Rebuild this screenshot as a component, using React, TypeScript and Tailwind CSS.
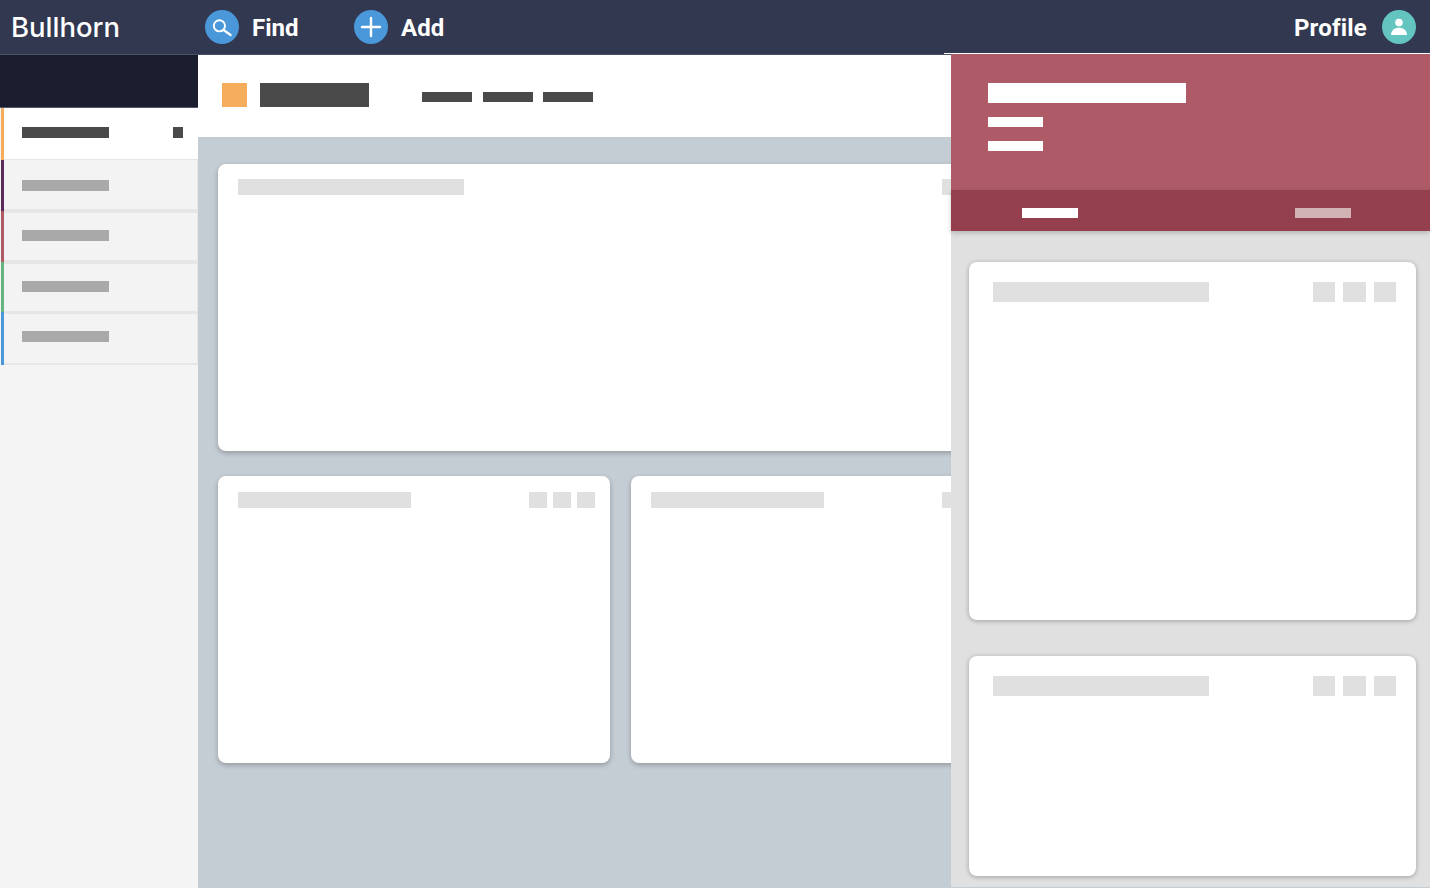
import React from 'react';

const sideRows = [
  { accent: 'bg-[#f5ad5b]', h: 'h-[52px]', cell: 'border-b pt-[19px] bg-white', bar: 'bg-[#4a4a4a]', active: true },
  { accent: 'bg-[#5a2a5c]', h: 'h-[51px]', cell: 'border-b-2 border-r pt-[20px]', bar: 'bg-[#a9a9a9]', active: false },
  { accent: 'bg-[#ae5b67]', h: 'h-[51px]', cell: 'border-t-2 border-b-2 border-r pt-[17px]', bar: 'bg-[#a9a9a9]', active: false },
  { accent: 'bg-[#66b57f]', h: 'h-[50px]', cell: 'border-t-2 border-b border-r pt-[17px]', bar: 'bg-[#a9a9a9]', active: false },
  { accent: 'bg-[#4a98d9]', h: 'h-[53px]', cell: 'border-t-2 border-b-2 border-r pt-[17px]', bar: 'bg-[#a9a9a9]', active: false },
];

const MainCard = ({ titleWidth, className }: { titleWidth: string; className: string }) => (
  <div className={`bg-white rounded-lg shadow-[0_2px_5px_rgba(0,0,0,0.25)] pl-5 pr-[15px] flex justify-between items-start ${className}`}>
    <div className={`h-4 bg-[#e0e0e0] ${titleWidth}`}></div>
    <div className="flex gap-1.5">
      <div className="w-[18px] h-4 bg-[#e0e0e0]"></div>
      <div className="w-[18px] h-4 bg-[#e0e0e0]"></div>
      <div className="w-[18px] h-4 bg-[#e0e0e0]"></div>
    </div>
  </div>
);

const PanelCard = ({ height }: { height: string }) => (
  <div className={`bg-white rounded-lg shadow-[0_1px_5px_rgba(0,0,0,0.3)] pt-5 pl-6 pr-5 flex justify-between items-start ${height}`}>
    <div className="w-[216px] h-5 bg-[#e0e0e0]"></div>
    <div className="flex gap-2">
      <div className="w-[22px] h-5 bg-[#e0e0e0]"></div>
      <div className="w-[23px] h-5 bg-[#e0e0e0]"></div>
      <div className="w-[22px] h-5 bg-[#e0e0e0]"></div>
    </div>
  </div>
);

export default function App() {
  return (
    <div className="relative w-[1430px] h-[888px] overflow-hidden bg-[#c4ccd4] font-['Roboto',sans-serif]">
      {/* top nav */}
      <header className="h-[55px] bg-[#323850] flex items-center text-white border-b border-[#4a5066]">
        <div className="w-[205px] pl-[11px] pt-px font-['Inter',sans-serif] font-medium text-[27.5px] leading-none">Bullhorn</div>
        <div className="flex items-center gap-[13px] w-[149px]">
          <div className="w-[34px] h-[34px] rounded-full bg-[#4a98d9] flex items-center justify-center">
            <svg width="22" height="22" viewBox="0 0 22 22" fill="none" stroke="white" strokeWidth="1.9" strokeLinecap="round">
              <circle cx="8.4" cy="9.8" r="5.6" />
              <path d="M12.6 14 L19.6 19" strokeWidth="2.2" />
            </svg>
          </div>
          <span className="font-bold text-2xl leading-none pt-px">Find</span>
        </div>
        <div className="flex items-center gap-[13px]">
          <div className="w-[34px] h-[34px] rounded-full bg-[#4a98d9] flex items-center justify-center">
            <svg width="22" height="22" viewBox="0 0 22 22" fill="none" stroke="white" strokeWidth="2.4" strokeLinecap="round">
              <path d="M11 2 V20 M2 11 H20" />
            </svg>
          </div>
          <span className="font-bold text-2xl leading-none pt-px">Add</span>
        </div>
        <div className="ml-auto flex items-center gap-[15px] pr-[14px]">
          <span className="font-bold text-2xl leading-none pt-px tracking-[0.2px]">Profile</span>
          <div className="w-[34px] h-[34px] rounded-full bg-[#64c4c0] flex items-center justify-center">
            <svg width="20" height="20" viewBox="0 0 20 20" fill="white">
              <circle cx="10" cy="5.6" r="3.8" />
              <path d="M2 18 C2 13 6 10.8 10 10.8 C14 10.8 18 13 18 18 Z" />
            </svg>
          </div>
        </div>
      </header>

      <div className="flex h-[833px]">
        {/* sidebar */}
        <aside className="w-[198px] shrink-0 bg-[#f4f4f4] flex flex-col">
          <div className="h-[53px] bg-[#1a1d2e] border-b border-[#55586a]"></div>
          {sideRows.map((row, i) => (
            <div key={i} className={`${row.h} flex bg-[#f3f3f3]`}>
              <div className={`ml-px w-[3px] h-full shrink-0 ${row.accent}`}></div>
              <div className={`flex-1 flex items-start border-[#e6e6e6] ${row.cell}`}>
                <div className={`ml-[18px] w-[87px] h-[11px] ${row.bar}`}></div>
                {row.active && <div className="ml-auto mr-[15px] w-[10px] h-[11px] bg-[#4a4a4a]"></div>}
              </div>
            </div>
          ))}
        </aside>

        {/* main area */}
        <main className="flex-1 min-w-0">
          <div className="h-[82px] bg-white flex items-center pl-6">
            <div className="w-[25px] h-6 bg-[#f5ad5b] -mt-[2px]"></div>
            <div className="ml-[13px] w-[109px] h-6 bg-[#4a4a4a] -mt-[2px]"></div>
            <div className="ml-[53px] flex mt-[2px]">
              <div className="w-[50px] h-[10px] bg-[#4a4a4a]"></div>
              <div className="ml-[11px] w-[50px] h-[10px] bg-[#4a4a4a]"></div>
              <div className="ml-[10px] w-[50px] h-[10px] bg-[#4a4a4a]"></div>
            </div>
          </div>
          <div className="pt-[27px] pl-5 flex flex-col gap-[25px]">
            <MainCard titleWidth="w-[226px]" className="w-[805px] h-[287px] pt-[15px]" />
            <div className="flex gap-[21px]">
              <MainCard titleWidth="w-[173px]" className="w-[392px] h-[287px] pt-4" />
              <MainCard titleWidth="w-[173px]" className="w-[392px] h-[287px] pt-4" />
            </div>
          </div>
        </main>
      </div>

      {/* slide-over record panel */}
      <div className="absolute left-[944px] right-0 top-[53px] h-px bg-white"></div>
      <div className="absolute left-[951px] right-0 top-[54px] bottom-0 bg-[#e0e0e0] border-b border-[#c4ccd4] flex flex-col">
        <div className="h-[136px] bg-[#ae5b67] pt-[29px] pl-[37px]">
          <div className="w-[198px] h-5 bg-white"></div>
          <div className="mt-[14px] w-[55px] h-[10px] bg-white"></div>
          <div className="mt-[14px] w-[55px] h-[10px] bg-white"></div>
        </div>
        <div className="h-[41px] bg-[#933f4d] shadow-[0_2px_5px_rgba(0,0,0,0.2)] flex items-center pl-[71px] gap-[217px] pt-[4px]">
          <div className="w-[56px] h-[10px] bg-white"></div>
          <div className="w-[56px] h-[10px] bg-[#d1b2b5]"></div>
        </div>
        <div className="pt-[31px] pl-[18px] pr-[14px] flex flex-col gap-[36px]">
          <PanelCard height="h-[358px]" />
          <PanelCard height="h-[220px]" />
        </div>
      </div>
    </div>
  );
}
